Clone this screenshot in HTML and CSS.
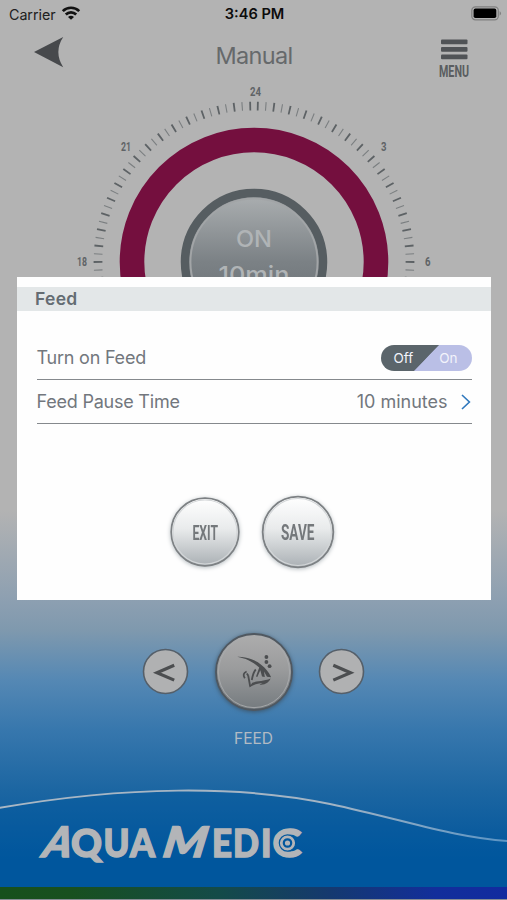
FILE: index.html
```html
<!DOCTYPE html>
<html lang="en">
<head>
<meta charset="utf-8">
<title>Manual</title>
<link rel="stylesheet" href="styles.css">
</head>
<body>
<div class="screen">
  <header class="status">
    <div class="carrier">Carrier
      <svg width="18" height="14" viewBox="0 0 18 14" fill="none" stroke="#111" stroke-width="2.7"><path d="M.8 5.1C5.3.6 12.7.6 17.2 5.1M3.8 8.5C6.7 5.6 11.3 5.6 14.2 8.5"/><path d="M6 10.9Q9 8.6 12 10.9L9 13.8Z" fill="#111" stroke="none"/></svg>
    </div>
    <div class="time">3:46 PM</div>
    <svg class="battery" width="31" height="15" viewBox="0 0 31 15"><rect x=".8" y=".8" width="26.5" height="13" rx="3.6" fill="none" stroke="#808080" stroke-width="1.2"/><rect x="2.6" y="2.6" width="22.7" height="9.4" rx="1.8"/><path d="M28.6 5v4.8q3-2.4 0-4.8" fill="#808080"/></svg>
  </header>
  <nav class="topbar">
    <svg class="back" width="30" height="31" viewBox="0 0 30 31"><path d="M0 15 29.2 0Q19.5 15 29.2 30.2Z" fill="#47494c"/></svg>
    <h1>Manual</h1>
    <div class="menu">
      <svg width="32" height="39" viewBox="0 0 32 39"><g fill="#505356"><rect x="3" y=".5" width="26.5" height="4.7" rx="1"/><rect x="3" y="8" width="26.5" height="4.7" rx="1"/><rect x="3" y="15.5" width="26.5" height="4.7" rx="1"/></g><text class="din" x="1" y="37.5" font-size="17" textLength="30" lengthAdjust="spacingAndGlyphs">MENU</text></svg>
    </div>
  </nav>
  <svg class="dial" width="507" height="220" viewBox="0 80 507 220">
    <defs>
      <linearGradient id="knob" x1="0" y1="0" x2="0" y2="1"><stop offset="0" stop-color="#a8acae"/><stop offset=".5" stop-color="#7b8185"/><stop offset="1" stop-color="#666c70"/></linearGradient>
      <g id="ticks" fill="none" stroke-width="8.6">
        <path d="M101.3 293.9A156 156 0 0 1 254 106" stroke="#5d6265" stroke-width="8.8" stroke-dasharray="1.8 14.27" stroke-dashoffset=".9"/>
        <path d="M101.3 293.9A156 156 0 0 1 254 106" stroke="#7b7f81" stroke-dasharray="1.1 14.97" stroke-dashoffset="-7.48"/>
      </g>
    </defs>
    <use href="#ticks"/>
    <use href="#ticks" transform="translate(508 0) scale(-1 1)"/>
    <circle cx="254" cy="262" r="122" fill="none" stroke="#740f3e" stroke-width="24.6"/>
    <circle cx="254" cy="262" r="69" fill="#8d9295" stroke="#565d61" stroke-width="8.5"/>
    <circle cx="254" cy="262" r="63.5" fill="url(#knob)" stroke="#a2a5a7" stroke-width="1.8"/>
    <g class="din" font-size="13.5">
      <text x="250" y="95.5" textLength="11" lengthAdjust="spacingAndGlyphs">24</text>
      <text x="121" y="150.5" textLength="10" lengthAdjust="spacingAndGlyphs">21</text>
      <text x="381" y="150.5" textLength="5.5" lengthAdjust="spacingAndGlyphs">3</text>
      <text x="77" y="266" textLength="10" lengthAdjust="spacingAndGlyphs">18</text>
      <text x="425" y="266" textLength="5.5" lengthAdjust="spacingAndGlyphs">6</text>
    </g>
    <g class="knob-text"><text x="254" y="246.5" text-anchor="middle" textLength="36" lengthAdjust="spacingAndGlyphs">ON</text><text x="254" y="282.5" text-anchor="middle" textLength="71" lengthAdjust="spacingAndGlyphs">10min</text></g>
  </svg>
  <section class="modes">
    <svg class="arrow" width="48" height="48" viewBox="0 0 48 48"><circle cx="24" cy="24" r="22" fill="#b0b1b2" stroke="#555f69" stroke-width="1.6"/><path d="M32.7 17.8 15.5 25.2 32.7 32.6" fill="none" stroke="#4c4e50" stroke-width="3.2"/></svg>
    <svg class="feed" width="84" height="84" viewBox="0 0 84 84">
      <defs><linearGradient id="metal" x1="0" y1="0" x2="0" y2="1"><stop offset="0" stop-color="#adadad"/><stop offset=".45" stop-color="#9b9c9d"/><stop offset="1" stop-color="#747a7e"/></linearGradient></defs>
      <circle cx="42" cy="42" r="38" fill="url(#metal)" stroke="#505860" stroke-width="1.8"/>
      <circle cx="42" cy="42" r="35.6" fill="none" stroke="#a9acae" stroke-width=".9"/>
      <g fill="#4c4e50">
        <path d="M25.3 26.7C39 26.2 53 34 59.2 47.2L55 46.8 52 41.5 52.8 47 50 46.5 48.3 40.3 45.3 47 44 46.6 47.2 37.6C40 31 33 28.2 25.3 26.7Z"/>
        <circle cx="54.4" cy="27" r="1.9"/><circle cx="54.4" cy="32" r="1.9"/><circle cx="57.6" cy="36.2" r="1.9"/>
        <path d="M37 57.6 40.3 52.8C46 50.5 52 51.5 58.6 48.5 56.5 53.5 52 54.8 47.5 55Q48.5 53.6 50.5 52.9 43.5 53.2 37 57.6Z"/>
      </g>
      <path d="M38.2 56.5 36.2 45.5M43.8 39.5Q41.3 42 39.8 50M34.6 41.5Q29.8 43.5 32.8 48.2M34.8 43.5 36.2 45.5" fill="none" stroke="#4c4e50" stroke-width="1.8"/>
    </svg>
    <svg class="arrow" width="48" height="48" viewBox="0 0 48 48"><circle cx="24" cy="24" r="22" fill="#b0b1b2" stroke="#555f69" stroke-width="1.6"/><path d="M15.8 17.8 33 25.2 15.8 32.6" fill="none" stroke="#4c4e50" stroke-width="3.2"/></svg>
  </section>
  <p class="mode-name">FEED</p>
  <svg class="brand" width="507" height="107" viewBox="0 780 507 107">
    <defs><linearGradient id="wave" x1="0" y1="0" x2="1" y2="0"><stop offset="0" stop-color="#a9b7c4"/><stop offset=".65" stop-color="#a3b4c4"/><stop offset="1" stop-color="#5b94c4"/></linearGradient></defs>
    <path d="M0 808C125 786 240 785 330 804C405 820 455 838 507 841V887H0Z" fill="#00579d" opacity=".4"/>
    <path d="M-1 808C125 786 240 785 330 804C405 820 455 838 508 841" fill="none" stroke="url(#wave)" stroke-width="2"/>
    <g class="logo" font-size="38.5">
      <text transform="translate(40 857) skewX(-19)" font-size="42" textLength="28" lengthAdjust="spacingAndGlyphs">A</text>
      <text x="71" y="856.5" textLength="31" lengthAdjust="spacingAndGlyphs">Q</text>
      <text x="103.5" y="856.5" textLength="26" lengthAdjust="spacingAndGlyphs">U</text>
      <text x="130" y="856.5" textLength="25" lengthAdjust="spacingAndGlyphs">A</text>
      <text transform="translate(160 857) skewX(-17)" font-size="42" textLength="43" lengthAdjust="spacingAndGlyphs">M</text>
      <text x="212" y="856.5" textLength="20" lengthAdjust="spacingAndGlyphs">E</text>
      <text x="233" y="856.5" textLength="26" lengthAdjust="spacingAndGlyphs">D</text>
      <text x="261" y="856.5" textLength="10.5" lengthAdjust="spacingAndGlyphs">I</text>
      <text x="272.5" y="856.5" textLength="29" lengthAdjust="spacingAndGlyphs">C</text>
    </g>
    <circle cx="287.5" cy="843" r="8.2" fill="#b3b5b8" stroke="#00579d" stroke-width="1.2"/><circle cx="287.5" cy="843" r="3.7" fill="none" stroke="#00579d" stroke-width="2.2"/>
  </svg>
  <div class="stripe"></div>

  <main class="dialog">
    <h2>Feed</h2>
    <div class="rows">
      <div class="row"><span class="label">Turn on Feed</span><div class="toggle"><span>Off</span><span>On</span></div></div>
      <div class="row pause"><span class="label">Feed Pause Time</span><span class="value">10 minutes</span><svg width="10" height="16" viewBox="0 0 10 16"><path d="M1 1 8.4 8 1 15" fill="none" stroke="#2f78bd" stroke-width="1.6"/></svg></div>
    </div>
    <div class="actions">
      <svg width="76" height="76" viewBox="0 0 76 76">
        <defs><linearGradient id="silver" x1="0" y1="0" x2="0" y2="1"><stop offset="0" stop-color="#fff"/><stop offset=".45" stop-color="#e9ebec"/><stop offset="1" stop-color="#aab0b4"/></linearGradient></defs>
        <circle cx="38" cy="38" r="33.8" fill="url(#silver)" stroke="#7d8184" stroke-width="1.7"/><circle cx="38" cy="38" r="32" fill="none" stroke="#d3d6d8" stroke-width="1.2"/>
        <text class="din" x="25.5" y="45.6" font-size="20.5" textLength="25.5" lengthAdjust="spacingAndGlyphs">EXIT</text></svg>
      <svg width="76" height="76" viewBox="0 0 76 76"><circle cx="38" cy="38" r="35.3" fill="url(#silver)" stroke="#7d8184" stroke-width="1.8"/><circle cx="38" cy="38" r="33.5" fill="none" stroke="#d3d6d8" stroke-width="1.2"/>
        <text class="din" x="21" y="45.6" font-size="21.5" textLength="33.5" lengthAdjust="spacingAndGlyphs">SAVE</text></svg>
    </div>
  </main>
</div>
</body>
</html>
```
FILE: styles.css
```css
* { box-sizing: border-box; }
body { margin: 0; font-family: Inter, "Liberation Sans", sans-serif; }
h1, h2, p { margin: 0; font-weight: 400; }
svg { display: block; flex: none; overflow: visible; }
.screen {
  position: relative;
  width: 507px;
  height: 900px;
  overflow: hidden;
  display: flex;
  flex-direction: column;
  background: linear-gradient(#b3b3b3 0, #b3b3b3 510px, #8c9fb1 602px, #7f99ae 630px, #5588b4 680px, #3777ad 730px, #1c66a2 790px, #0c5c9e 830px, #00569d 860px);
}
.status { display: grid; grid-template-columns: 1fr auto 1fr; align-items: center; height: 28px; padding: 0 5px 0 9px; font-size: 14.3px; color: #202020; }
.carrier { display: flex; align-items: center; gap: 6px; letter-spacing: -.05px; }
.carrier svg { margin-top: -3px; }
.time { font-weight: 600; font-size: 14.6px; color: #0c0c0c; transform: translateX(-1px); }
.battery { justify-self: end; margin-top: -2px; }
.topbar { display: grid; grid-template-columns: 1fr auto 1fr; height: 52px; padding: 0 37px 0 34px; }
.back { margin-top: 9px; }
h1 { margin-top: 13px; font-size: 23.5px; line-height: 30px; letter-spacing: -.65px; color: #66696b; transform: translateX(2px); }
.menu { justify-self: end; margin-top: 11px; }
.dial { flex: none; }
.din { font-family: Roboto, "Liberation Sans", sans-serif; font-weight: 700; fill: #74787b; }
.menu .din { fill: #5a5d60; }
.dial .din { fill: #5f6366; }
.knob-text { font-size: 23.5px; font-weight: 500; fill: #b0b4b6; }
.modes { display: flex; align-items: center; justify-content: center; gap: 4px; margin-top: 330px; height: 84px; }
.feed { margin: 0 18px; filter: drop-shadow(0 1px 2px #3d566b); }
.mode-name { margin-top: 14px; text-align: center; font-size: 15.5px; line-height: 22px; color: #b2bbc4; }
.brand { margin-top: 30px; }
.logo { font-family: Lato, "Liberation Sans", sans-serif; font-weight: 900; fill: #b3b5b8; stroke: #b3b5b8; stroke-width: 1.5px; }
.stripe { flex: none; height: 13px; background: linear-gradient(90deg, #17501c 0, #18501f 14%, #144b48 43%, #15396f 65%, #122e9b 86%, #122b9f 100%); border-bottom: 1px solid #858c94; }
.modes .arrow { transform: translate(-.5px, -.5px); }
.dialog {
  position: absolute;
  left: 17px;
  top: 277px;
  width: 474px;
  height: 323px;
  padding-top: 10px;
  background: #fefefe;
}
h2 { height: 24px; padding-left: 18px; background: #e3e7e8; color: #646c72; font-size: 17.5px; line-height: 24px; font-weight: 600; letter-spacing: .3px; }
.rows { padding: 25px 19.5px 0; }
.row { display: flex; align-items: center; height: 44px; border-bottom: 1.5px solid #85898d; color: #72777d; font-size: 18px; }
.label { flex: 1; letter-spacing: -.22px; }
.toggle { display: flex; align-items: center; justify-content: space-between; width: 91px; height: 26px; padding: 0 14px 0 13px; border-radius: 13px; background: linear-gradient(134deg, #5b656b 49.5%, #babfe6 50.5%); color: #f2f3fb; font-size: 13.5px; }
.pause svg { margin-left: 13px; margin-right: 1px; }
.actions { display: flex; justify-content: center; gap: 17px; margin-top: 70px; padding-right: 6px; }
.actions svg { filter: drop-shadow(0 1px 2px #b5bcc0); }
```
